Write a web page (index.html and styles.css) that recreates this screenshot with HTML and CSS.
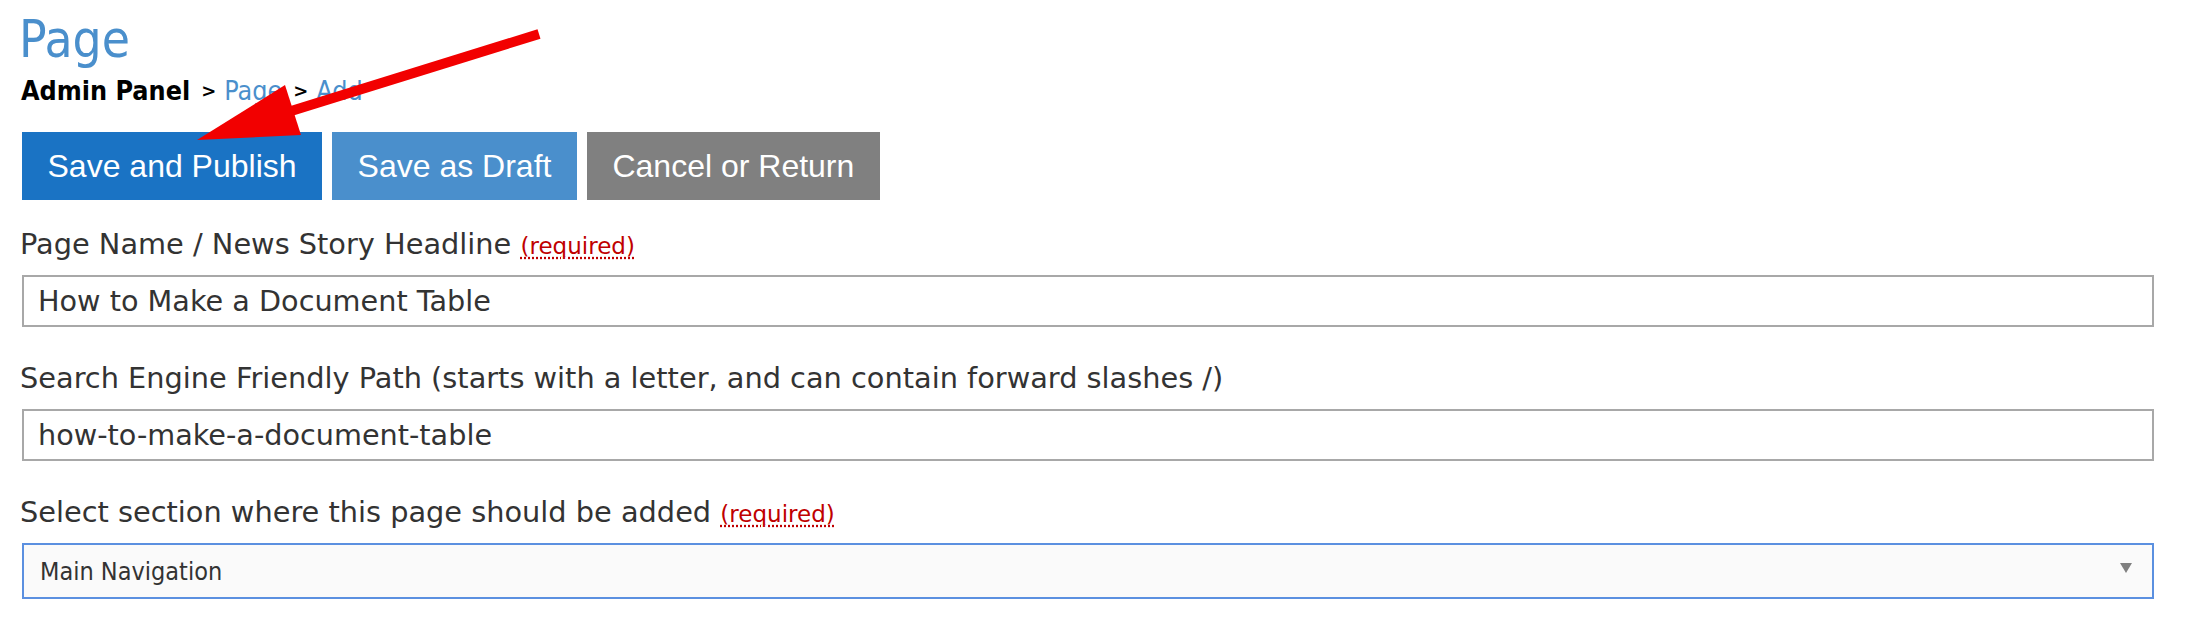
FILE: index.html
```html
<!DOCTYPE html>
<html lang="en">
<head>
<meta charset="utf-8">
<title>Page - Add</title>
<link rel="stylesheet" href="styles.css">
</head>
<body>
<div class="page">
  <h1 class="title">Page</h1>
  <nav class="crumbs"><strong>Admin Panel</strong><span class="sep">&gt;</span><a href="#">Page</a><span class="sep">&gt;</span><a href="#">Add</a></nav>
  <div class="actions">
    <button class="btn btn-publish" type="button">Save and Publish</button>
    <button class="btn btn-draft" type="button">Save as Draft</button>
    <button class="btn btn-cancel" type="button">Cancel or Return</button>
  </div>
  <form class="form">
    <div class="field">
      <label class="label" for="name">Page Name / News Story Headline <abbr class="req" title="required">(required)</abbr></label>
      <input class="input" id="name" type="text" value="How to Make a Document Table">
    </div>
    <div class="field">
      <label class="label" for="path">Search Engine Friendly Path (starts with a letter, and can contain forward slashes /)</label>
      <input class="input" id="path" type="text" value="how-to-make-a-document-table">
    </div>
    <div class="field">
      <label class="label" for="section">Select section where this page should be added <abbr class="req" title="required">(required)</abbr></label>
      <div class="select-wrap">
        <select class="select" id="section">
          <option>Main Navigation</option>
        </select>
      </div>
    </div>
  </form>
  <svg class="annotation" width="600" height="200" viewBox="0 0 600 200" aria-hidden="true">
    <line x1="288" y1="112" x2="539" y2="34" stroke="#f20000" stroke-width="10"/>
    <polygon points="197,140 285,85 301,135" fill="#f20000"/>
  </svg>
</div>
</body>
</html>
```
FILE: styles.css
```css
html, body {
  margin: 0;
  padding: 0;
  background: #ffffff;
}

.page {
  position: relative;
  padding: 10px 40px 0 22px;
  font-family: "DejaVu Sans", Verdana, sans-serif;
  color: #333333;
}

.title {
  height: 60px;
  margin: 0 0 0 -3px;
  font-family: "DejaVu Sans Condensed", "DejaVu Sans", sans-serif;
  font-weight: normal;
  font-size: 51px;
  line-height: 60px;
  color: #4a8fcc;
}

.crumbs {
  display: flex;
  align-items: baseline;
  height: 36px;
  margin: 3px 0 0 -1px;
  font-family: "DejaVu Sans Condensed", "DejaVu Sans", sans-serif;
  font-size: 26.7px;
  line-height: 36px;
  color: #000000;
}

.crumbs strong {
  font-weight: bold;
}

.crumbs .sep {
  align-self: center;
  margin: 0 8px 0 11px;
  font-family: "DejaVu Sans", Verdana, sans-serif;
  font-weight: bold;
  font-size: 18px;
  line-height: 1;
}

.crumbs a {
  color: #4a8fcc;
  text-decoration: none;
}

.actions {
  display: flex;
  gap: 10px;
  margin-top: 23px;
}

.btn {
  height: 68px;
  padding: 0 25.5px;
  border: 0;
  border-radius: 0;
  font-family: "Liberation Sans", Arial, sans-serif;
  font-size: 32px;
  line-height: 68px;
  color: #ffffff;
  cursor: pointer;
}

.btn-publish {
  background: #1a73c4;
}

.btn-draft {
  background: #4a8fcc;
}

.btn-cancel {
  background: #808080;
}

.form {
  margin-top: 24px;
}

.field {
  display: flex;
  flex-direction: column;
  gap: 11px;
  margin-bottom: 31px;
}

.label {
  display: block;
  height: 40px;
  margin-left: -2px;
  font-size: 28.8px;
  line-height: 40px;
  color: #333333;
}

.req {
  font-size: 0.8em;
  line-height: 1;
  color: #c00000;
  text-decoration: underline dotted #c00000;
  text-underline-offset: 3px;
  cursor: help;
}

.input {
  box-sizing: border-box;
  width: 100%;
  height: 52px;
  margin: 0;
  padding: 0 14px;
  border: 2px solid #a8a8a8;
  border-radius: 0;
  background: #ffffff;
  font-family: "DejaVu Sans", Verdana, sans-serif;
  font-size: 28.7px;
  color: #333333;
  outline: none;
}

.select-wrap {
  position: relative;
}

.select {
  display: block;
  box-sizing: border-box;
  width: 100%;
  height: 56px;
  margin: 0;
  padding: 0 16px;
  border: 2px solid #5b90e0;
  border-radius: 0;
  background: #fafafa;
  -webkit-appearance: none;
  appearance: none;
  font-family: "DejaVu Sans Condensed", "DejaVu Sans", sans-serif;
  font-size: 25px;
  color: #333333;
  outline: none;
}

.select-wrap::after {
  content: "";
  position: absolute;
  right: 22px;
  top: 20px;
  width: 0;
  height: 0;
  border-left: 6px solid transparent;
  border-right: 6px solid transparent;
  border-top: 10px solid #808080;
  pointer-events: none;
}

.annotation {
  position: absolute;
  left: 0;
  top: 0;
  pointer-events: none;
}
```
